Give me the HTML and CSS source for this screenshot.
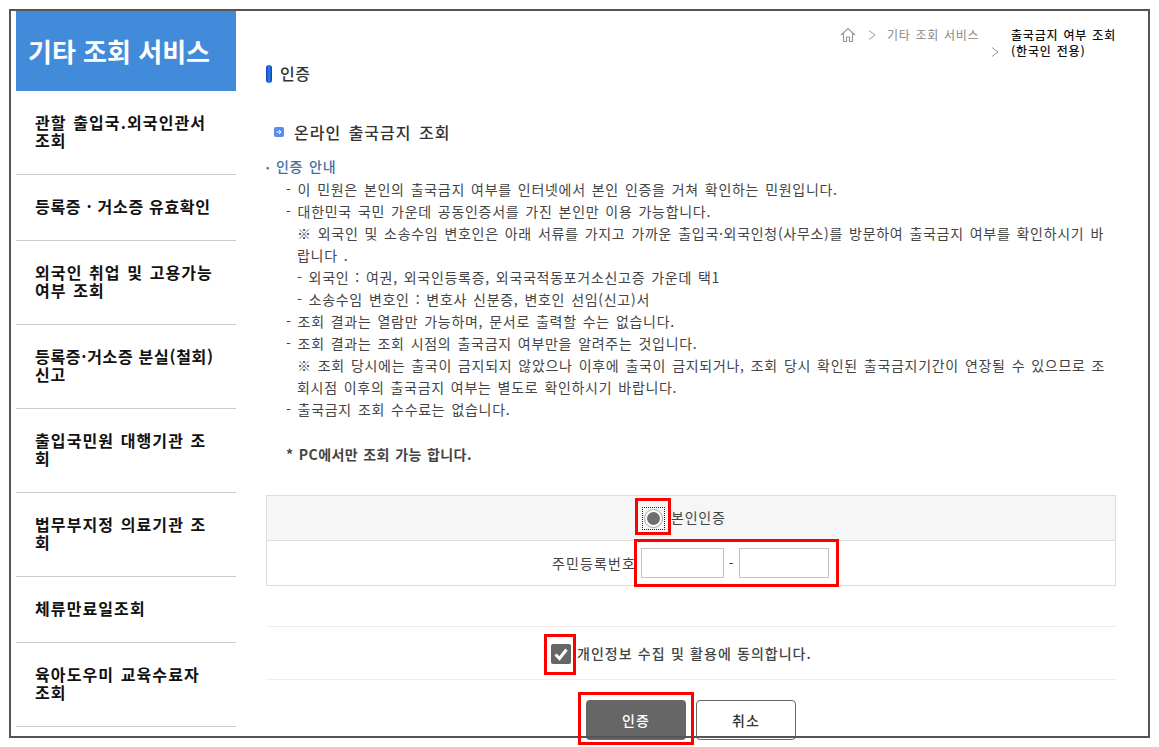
FILE: index.html
```html
<!DOCTYPE html>
<html lang="ko">
<head>
<meta charset="utf-8">
<title>출국금지 여부 조회</title>
<link rel="stylesheet" href="styles.css">
</head>
<body>
<div class="page">
  <aside class="side">
    <h1 class="side-title">기타 조회 서비스</h1>
    <ul class="menu">
      <li class="two"><span>관할 출입국.외국인관서 조회</span></li>
      <li class="tight"><span>등록증 · 거소증 유효확인</span></li>
      <li class="two"><span>외국인 취업 및 고용가능 여부 조회</span></li>
      <li class="two tight"><span>등록증·거소증 분실(철회) 신고</span></li>
      <li class="two"><span>출입국민원 대행기관 조회</span></li>
      <li class="two"><span>법무부지정 의료기관 조회</span></li>
      <li><span>체류만료일조회</span></li>
      <li class="two"><span>육아도우미 교육수료자 조회</span></li>
    </ul>
  </aside>
  <main class="main">
    <div class="crumbs">
      <svg class="home" width="16" height="16" viewBox="0 0 16 16" fill="none" stroke="#999" stroke-width="1.2"><path d="M1 8 8 1.5 15 8M3.5 6.5V14.5H6.5V10H9.5V14.5H12.5V6.5"/></svg>
      <svg class="chev" width="8" height="10" viewBox="0 0 8 10" fill="none" stroke="#999"><path d="M1 .5 7 5 1 9.5"/></svg>
      <span class="crumb-grey">기타 조회 서비스</span>
      <svg class="chev chev-low" width="8" height="10" viewBox="0 0 8 10" fill="none" stroke="#999"><path d="M1 .5 7 5 1 9.5"/></svg>
      <span class="crumb-now">출국금지 여부 조회<br>(한국인 전용)</span>
    </div>
    <h2 class="page-title"><span class="pill"></span><span class="title-text">인증</span></h2>
    <h3 class="sec-title">
      <svg class="arrow-ic" width="10" height="10" viewBox="0 0 10 10"><rect width="10" height="10" rx="2" fill="#5b8def"/><path d="M2.5 5H7M5 3l2 2-2 2" fill="none" stroke="#fff"/></svg>
      온라인 출국금지 조회
    </h3>
    <div class="guide">
      <p class="guide-head"><span class="dot">•</span>인증 안내</p>
      <p>- 이 민원은 본인의 출국금지 여부를 인터넷에서 본인 인증을 거쳐 확인하는 민원입니다.</p>
      <p>- 대한민국 국민 가운데 공동인증서를 가진 본인만 이용 가능합니다.</p>
      <p class="sub">※ 외국인 및 소송수임 변호인은 아래 서류를 가지고 가까운 출입국·외국인청(사무소)를 방문하여 출국금지 여부를 확인하시기 바랍니다 .</p>
      <p class="sub">- 외국인 : 여권, 외국인등록증, 외국국적동포거소신고증 가운데 택1</p>
      <p class="sub">- 소송수임 변호인 : 변호사 신분증, 변호인 선임(신고)서</p>
      <p>- 조회 결과는 열람만 가능하며, 문서로 출력할 수는 없습니다.</p>
      <p>- 조회 결과는 조회 시점의 출국금지 여부만을 알려주는 것입니다.</p>
      <p class="sub">※ 조회 당시에는 출국이 금지되지 않았으나 이후에 출국이 금지되거나, 조회 당시 확인된 출국금지기간이 연장될 수 있으므로 조회시점 이후의 출국금지 여부는 별도로 확인하시기 바랍니다.</p>
      <p>- 출국금지 조회 수수료는 없습니다.</p>
      <p class="pc">* PC에서만 조회 가능 합니다.</p>
    </div>
    <div class="auth-box">
      <div class="auth-head">
        <span class="radio"><span class="radio-ring"><span class="radio-dot"></span></span></span>
        <span class="auth-label">본인인증</span>
      </div>
      <div class="auth-row">
        <span class="rrn-label">주민등록번호</span>
        <span class="field f1"></span>
        <span class="hyphen">-</span>
        <span class="field f2"></span>
      </div>
    </div>
    <div class="agree">
      <span class="check"><svg width="20" height="20" viewBox="0 0 20 20"><rect width="20" height="20" rx="2" fill="#666"/><path d="M4.5 10.5 8.5 14.5 15.5 5.5" fill="none" stroke="#fff" stroke-width="3"/></svg></span>
      <span>개인정보 수집 및 활용에 동의합니다.</span>
    </div>
    <div class="btns">
      <span class="btn btn-dark">인증</span>
      <span class="btn btn-light">취소</span>
    </div>
  </main>
</div>
<div class="frame"></div>
<div class="mark m-radio"></div>
<div class="mark m-input"></div>
<div class="mark m-check"></div>
<div class="mark m-btn"></div>
</body>
</html>
```
FILE: styles.css
```css
* { box-sizing: border-box; }
html, body { margin: 0; padding: 0; height: 747px; overflow: hidden; background: #fff; }
body { font-family: "Noto Sans CJK KR", "Noto Sans", sans-serif; color: #333; position: relative; }
.page { display: flex; padding: 11px 0 0 16px; gap: 30px; width: 1159px; height: 747px; overflow: hidden; }
.side { width: 220px; flex: none; }
.side-title { margin: 0; height: 80px; background: #428bdb; color: #fff; font-size: 26px; font-weight: 700; line-height: 79px; padding-left: 12px; }
.menu { list-style: none; margin: 0; padding: 0; }
.menu li { height: 66px; border-bottom: 1px solid #ccc; padding: 0 19px 4px; display: flex; align-items: center; font-size: 16px; font-weight: 700; line-height: 18px; letter-spacing: 1.1px; word-spacing: 1px; color: #111; }
.menu li.two { height: 84px; }
.menu li.tight { letter-spacing: .7px; word-spacing: 0; padding-right: 14px; }
.main { width: 850px; flex: none; position: relative; }
.crumbs { position: relative; height: 49px; font-size: 12px; line-height: 16px; }
.home { position: absolute; left: 574px; top: 16px; }
.chev { position: absolute; left: 602px; top: 19px; }
.chev-low { left: 725px; top: 36px; }
.crumb-grey { position: absolute; left: 621px; top: 16px; color: #888; letter-spacing: .7px; word-spacing: 1px; }
.crumb-now { position: absolute; left: 745px; top: 16px; color: #111; font-weight: 500; letter-spacing: .8px; word-spacing: 1px; white-space: nowrap; }
.page-title { margin: 0; height: 28px; font-size: 16px; font-weight: 500; line-height: 28px; display: flex; align-items: center; color: #333; letter-spacing: .6px; }
.title-text { margin-bottom: 3px; }
.pill { width: 6px; height: 18px; border-radius: 3px; background: linear-gradient(90deg, #0a3fb0, #2f80f0 50%, #0a3fb0); margin-right: 8px; }
.sec-title { margin: 33px 0 0 8px; font-size: 16px; font-weight: 500; line-height: 22px; height: 22px; display: flex; align-items: center; gap: 10px; color: #333; letter-spacing: 1px; word-spacing: 2px; }
.guide { margin-top: 13px; font-size: 14px; line-height: 22px; color: #444; letter-spacing: .7px; word-spacing: 1.4px; }
.guide p { margin: 0; padding-left: 20px; }
.guide p.sub { padding-left: 31px; padding-right: 0; }
.guide p.guide-head { padding-left: 0; color: #41729f; font-weight: 500; line-height: 21px; }
.dot { font-size: 9px; margin-right: 6px; vertical-align: 1px; }
.guide p.pc { margin-top: 23px; font-weight: 700; color: #444; letter-spacing: .4px; word-spacing: 1px; }
.auth-box { margin-top: 30px; border: 1px solid #ddd; height: 91px; font-size: 14px; letter-spacing: .8px; color: #444; }
.auth-head { height: 45px; background: #f6f6f6; border-bottom: 1px solid #ddd; display: flex; align-items: center; padding-left: 375px; gap: 6px; }
.auth-label { margin-bottom: 3px; }
.radio { width: 23px; height: 23px; border: 1px dotted #222; display: flex; align-items: center; justify-content: center; }
.radio-ring { width: 19px; height: 19px; border: 1px solid #aaa; border-radius: 50%; display: flex; align-items: center; justify-content: center; background: #fff; }
.radio-dot { width: 13px; height: 13px; border-radius: 50%; background: #6e6e6e; }
.auth-row { height: 44px; display: flex; align-items: center; padding-left: 285px; }
.rrn-label { width: 89px; flex: none; white-space: nowrap; letter-spacing: 1.1px; }
.field { height: 30px; border: 1px solid #c4c4c4; background: #fff; display: block; }
.f1 { width: 83px; }
.f2 { width: 90px; }
.hyphen { width: 15px; text-align: center; }
.agree { margin-top: 40px; height: 54px; border-top: 1px solid #eee; border-bottom: 1px solid #eee; display: flex; align-items: center; padding-left: 285px; gap: 6px; font-size: 14px; font-weight: 500; letter-spacing: 1px; word-spacing: .4px; color: #444; }
.check { height: 20px; width: 20px; display: block; margin-top: 2px; }
.btns { display: flex; justify-content: center; gap: 10px; margin-top: 20px; }
.btn { width: 100px; height: 40px; border-radius: 4px; display: flex; align-items: center; justify-content: center; font-size: 14px; font-weight: 500; letter-spacing: 1px; }
.btn-dark { background: #666; color: #fff; }
.btn-light { background: #fff; border: 1px solid #666; color: #333; }
.frame { position: absolute; left: 9px; top: 9px; width: 1141px; height: 729px; border: 2px solid #555; pointer-events: none; }
.mark { position: absolute; border: 3px solid #f00; }
.m-radio { left: 635px; top: 498px; width: 36px; height: 37px; }
.m-input { left: 634px; top: 539px; width: 205px; height: 48px; }
.m-check { left: 544px; top: 634px; width: 32px; height: 41px; }
.m-btn { left: 578px; top: 692px; width: 116px; height: 53px; }
```
